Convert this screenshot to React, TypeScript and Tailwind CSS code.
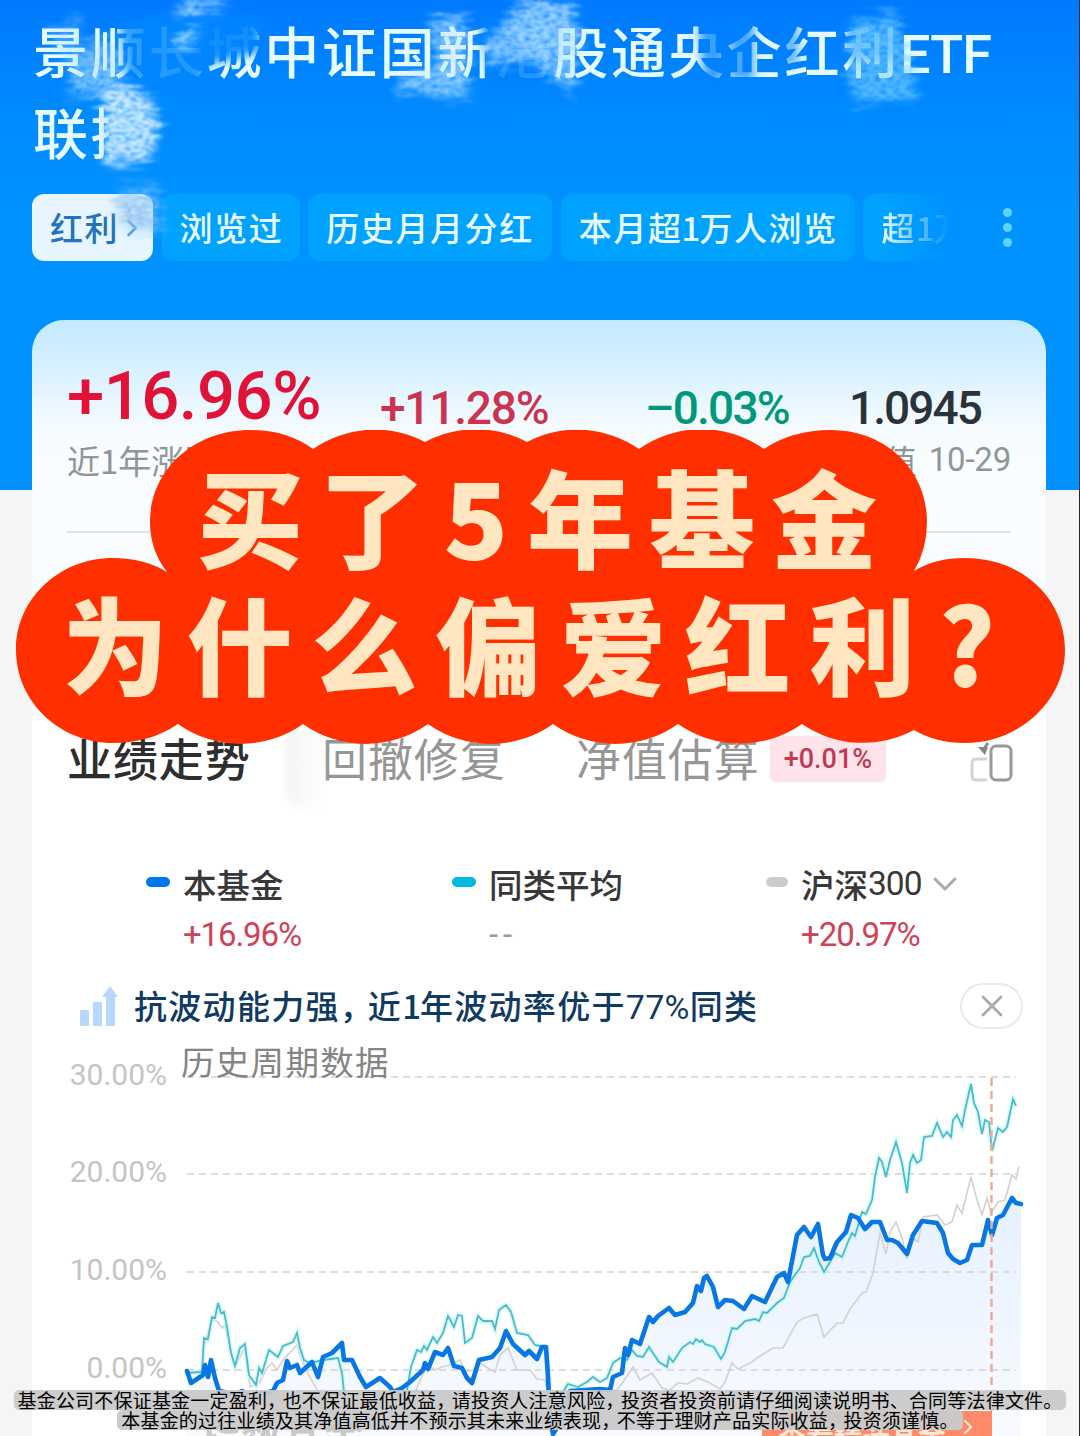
import React from "react";
import { ChevronDown, ChevronRight, X } from "lucide-react";

const tealLine =
  "188,1373 202,1372 204,1338 208,1339 212,1317 215,1318 218,1303 221,1313 224,1312 227,1327 231,1353 235,1366 240,1348 245,1344 249,1375 256,1385 259,1368 262,1373 269,1350 278,1357 283,1346 293,1342 297,1333 300,1348 304,1360 310,1363 323,1360 338,1358 342,1373 344,1392 404,1400 407,1390 411,1367 417,1350 421,1352 424,1346 427,1350 433,1337 437,1343 443,1333 448,1316 454,1327 458,1315 462,1316 465,1343 472,1338 478,1316 483,1321 492,1321 495,1329 499,1310 506,1305 511,1312 517,1333 528,1335 535,1345 545,1347 548,1360 550,1395 563,1392 568,1384 578,1387 587,1382 593,1377 600,1382 607,1378 613,1363 620,1358 627,1360 632,1350 637,1356 643,1357 649,1347 659,1362 667,1367 669,1357 673,1362 682,1348 690,1342 693,1344 696,1339 700,1342 702,1340 705,1344 714,1347 721,1359 725,1352 732,1328 737,1329 745,1321 755,1319 759,1321 763,1312 767,1313 777,1303 784,1298 790,1282 800,1268 804,1257 810,1256 814,1248 819,1262 824,1272 830,1262 835,1253 842,1257 848,1242 852,1233 855,1236 862,1212 866,1214 872,1200 875,1177 879,1158 882,1162 886,1177 890,1160 896,1142 902,1163 907,1193 910,1163 913,1155 917,1163 921,1160 924,1137 932,1136 937,1123 943,1137 947,1132 951,1137 953,1120 957,1115 962,1126 965,1110 971,1084 974,1103 978,1112 982,1134 985,1120 989,1122 992,1151 998,1128 1003,1132 1007,1127 1013,1099 1016,1106";

const fundLine =
  "187,1371 191,1383 203,1375 205,1365 208,1377 211,1360 215,1378 219,1391 236,1394 242,1391 250,1396 273,1391 277,1383 283,1380 287,1361 290,1368 297,1365 300,1373 312,1362 318,1377 323,1357 332,1353 342,1343 344,1360 352,1360 360,1377 366,1387 380,1378 390,1387 393,1392 402,1388 410,1382 423,1370 425,1363 428,1369 435,1352 443,1355 448,1348 454,1366 462,1368 467,1378 472,1383 479,1360 492,1357 500,1348 506,1331 513,1344 525,1355 529,1351 537,1359 542,1347 546,1347 548,1377 550,1420 553,1434 562,1420 570,1391 600,1389 610,1390 613,1377 622,1373 625,1348 628,1355 632,1340 640,1344 649,1317 653,1322 658,1316 669,1308 675,1315 685,1312 693,1303 697,1286 701,1291 704,1278 707,1276 713,1287 718,1307 725,1300 733,1301 744,1309 752,1296 765,1302 777,1277 784,1273 788,1282 797,1235 804,1227 811,1237 818,1224 823,1255 825,1259 830,1258 837,1242 846,1232 851,1215 858,1218 865,1229 872,1222 880,1222 887,1240 892,1240 898,1243 907,1254 913,1235 922,1221 937,1223 943,1233 948,1253 953,1259 960,1263 967,1260 972,1245 982,1245 988,1220 992,1235 997,1218 1003,1215 1012,1198 1016,1203 1021,1204";

const csiLine =
  "190,1372 202,1370 203,1350 212,1320 218,1322 222,1328 225,1325 232,1355 235,1366 240,1357 245,1348 250,1387 260,1382 267,1368 272,1363 277,1370 283,1360 297,1345 300,1355 307,1372 320,1395 415,1392 427,1365 435,1370 442,1367 450,1365 460,1360 465,1372 473,1370 480,1363 488,1368 495,1372 500,1355 508,1348 517,1370 530,1370 537,1379 545,1380 548,1395 617,1390 623,1382 633,1367 640,1380 652,1373 662,1388 670,1390 678,1383 687,1384 698,1378 710,1383 720,1389 725,1382 732,1363 738,1369 752,1362 757,1358 773,1348 783,1348 797,1322 804,1318 817,1314 824,1337 837,1323 843,1323 850,1309 862,1293 866,1292 873,1273 880,1233 886,1254 890,1232 896,1222 902,1238 907,1259 912,1237 918,1242 923,1217 937,1215 945,1225 952,1222 957,1205 962,1213 971,1177 977,1200 982,1215 987,1198 991,1213 998,1202 1005,1200 1012,1175 1016,1179 1019,1166";

const axis = [
  { label: "30.00%", y: 1077 },
  { label: "20.00%", y: 1174 },
  { label: "10.00%", y: 1272 },
  { label: "0.00%", y: 1370 },
];

const cjk = "font-['Noto_Sans_CJK_SC',sans-serif]";
const num = "font-[Roboto,'Noto_Sans_CJK_SC',sans-serif]";

function Smudges() {
  return (
    <svg className="absolute inset-0" width="1080" height="300" viewBox="0 0 1080 300">
      <defs>
        <filter id="grain" x="-10%" y="-10%" width="120%" height="120%">
          <feGaussianBlur in="SourceGraphic" stdDeviation="4" result="b" />
          <feTurbulence type="fractalNoise" baseFrequency="0.03 0.18" numOctaves="2" seed="7" result="w" />
          <feDisplacementMap in="b" in2="w" scale="26" xChannelSelector="R" yChannelSelector="A" result="d" />
          <feTurbulence type="fractalNoise" baseFrequency="0.16 0.34" numOctaves="3" seed="4" result="n" />
          <feColorMatrix in="n" type="matrix" values="0 0 0 0 1  0 0 0 0 1  0 0 0 0 1  0 2 0 0 -0.2" result="m" />
          <feComposite in="d" in2="m" operator="in" />
          <feGaussianBlur stdDeviation="0.8" />
        </filter>
        <filter id="soft">
          <feGaussianBlur stdDeviation="5" />
        </filter>
      </defs>
      <g filter="url(#soft)">
        <path d="M120 20h30v62h-24z" fill="#0787ff" opacity=".8" />
        <path d="M146 16h58v68h-58z" fill="#0787ff" opacity=".85" />
        <path d="M200 16h60v36l-60 14z" fill="#0684ff" opacity=".92" />
        <path d="M480 18h70v68h-58z" fill="#0581ff" opacity=".85" />
        <path d="M698 20h26v62h-20z" fill="#0581ff" opacity=".75" />
        <path d="M730 16h24v64h-24z" fill="#0581ff" opacity=".7" />
        <path d="M784 16h14v50h-14z" fill="#0581ff" opacity=".6" />
        <path d="M846 16h50v44h-50z" fill="#0787ff" opacity=".6" />
        <path d="M110 96h50v68h-50z" fill="#0a92ff" />
      </g>
      <g filter="url(#grain)">
        <path d="M40 30l40-14v40l46 6 2 34-62 4 10-22z" fill="#9bdcff" opacity=".4" />
        <path d="M82 40h34l6 56-54-6z" fill="#b4e4ff" opacity=".55" />
        <path d="M178 0h54l-14 8-40 8z" fill="#a6dcff" />
        <path d="M172 42l28-16-8 20z" fill="#a4ddff" />
        <path d="M102 90l36-2 22 36-12 34-40 10-4-60z" fill="#e4f5ff" />
        <path d="M102 96h50l-6 58-40 10z" fill="#c8eaff" opacity=".8" />
        <path d="M112 188l46-6 6 52-40-4-10-24z" fill="#79c8ff" opacity=".5" />
        <path d="M118 198h36v30l-34-4z" fill="#8fc1ee" opacity=".8" />
        <path d="M430 18l36-2 2 80-72-2 4-20 36-4z" fill="#c4e8ff" opacity=".7" />
        <path d="M484 44l30-30 8-14h46l14 46-10 48-40-34-48 4z" fill="#b8e4ff" opacity=".7" />
        <path d="M508 4h66v50h-50z" fill="#a8dbff" opacity=".6" />
        <path d="M850 24l46-12 18 62 2 24-64 6z" fill="#7cd2ff" opacity=".7" />
      </g>
    </svg>
  );
}

function Header() {
  return (
    <header className="relative h-[490px] bg-[linear-gradient(180deg,#007aff_0%,#0088ff_20%,#0092ff_42%,#0092ff_100%)] pt-[9px] pl-[33px] text-[#e6fbff]">
      <h1 className={`${cjk} h-[165px] text-[55px] leading-[81px] font-medium tracking-[2.8px] whitespace-nowrap`}>
        景顺长城中证国新港股通央企红利<span className="font-[Roboto] text-[54px] leading-none tracking-[-0.8px]">ETF</span>
        <br />
        联接
      </h1>
      <div className={`${cjk} -ml-px mt-[20px] flex h-[67px] gap-[8.6px] text-[33px] leading-[67px] font-medium tracking-[1.6px] whitespace-nowrap`}>
        <div className="flex w-[121px] items-center rounded-xl bg-[#e6f5ff] pl-[18px] text-[#2372bd]">
          红利
          <ChevronRight className="-ml-px h-7 w-7 text-[#5b9bd4]" strokeWidth={2.2} />
        </div>
        <div className="w-[138px] rounded-xl bg-[#00a2ff] pl-[18px]">浏览过</div>
        <div className="w-[244px] rounded-xl bg-[#00a2ff] pl-[18px]">历史月月分红</div>
        <div className="w-[294px] rounded-xl bg-[#00a2ff] pl-[18px]">
          本月超<span className="-ml-px tracking-[-1px]">1</span>万人浏览
        </div>
        <div className="w-[96px] overflow-hidden rounded-l-xl bg-[#00a2ff] mask-r-from-20% mask-r-to-90% pl-[18px]">
          超<span className="tracking-[-1px]">1</span>万
        </div>
        <div className="ml-[35px] flex flex-col justify-center gap-[6px]">
          <i className="h-[9px] w-[9px] rounded-full bg-[#5cd2ff]" />
          <i className="h-[9px] w-[9px] rounded-full bg-[#5cd2ff]" />
          <i className="h-[9px] w-[9px] rounded-full bg-[#5cd2ff]" />
        </div>
      </div>
      <Smudges />
    </header>
  );
}

function Stats() {
  return (
    <section className="mx-[35px] h-[213px] border-b-2 border-[#dfe3e6] whitespace-nowrap">
      <div className={`${num} flex h-[118px] items-end text-[46px] leading-[60px] font-medium`}>
        <span className="w-[313px] text-[67px] leading-[84px] tracking-[-0.5px] text-[#e01238]">+16.96%</span>
        <span className="w-[265px] tracking-[-1.2px] text-[#cc3350]">+11.28%</span>
        <span className="w-[204px] tracking-[-1.8px] text-[#009878]">–0.03%</span>
        <span className="tracking-[-1.9px] text-[#2b3238]">1.0945</span>
      </div>
      <div className={`${cjk} flex justify-between text-[33px] leading-[44px] text-[#909597]`}>
        <span>近1年涨跌幅</span>
        <span className="flex">
          净值<span className={`${num} ml-3 tracking-[-0.2px]`}>10-29</span>
        </span>
      </div>
    </section>
  );
}

function Tabs() {
  return (
    <nav className={`${cjk} mt-[190px] flex h-[70px] items-center pl-[35px] text-[45px] tracking-[0.9px] whitespace-nowrap text-[#969696]`}>
      <b className="w-[219px] font-medium text-[#2e2e2e]">业绩走势</b>
      <div className="h-[100px] w-[36px] rounded-bl-2xl bg-[linear-gradient(90deg,#f4f4f4,#ffffff)] blur-[3px]" />
      <span className="w-[254px]">回撤修复</span>
      <span className="w-[194px]">净值估算</span>
      <span className={`${num} mt-[2px] h-[46px] w-[116px] rounded-md bg-[#fee4ea] text-center text-[27px] leading-[46px] font-medium tracking-normal text-[#c23a52]`}>
        +0.01%
      </span>
      <svg className="mt-3 ml-[83px]" width="46" height="44" viewBox="0 0 46 44" fill="none" strokeWidth="3">
        <path d="M18 17H7q-4 0-4 4v13q0 4 4 4h11" stroke="#d4d4d4" />
        <path d="M19 1q-3 3-4 8" stroke="#8c8c8c" />
        <path d="M9 5h10l-3 8z" fill="#858585" />
        <rect x="22" y="4" width="20" height="34" rx="5" stroke="#999" />
      </svg>
    </nav>
  );
}

function Legend() {
  return (
    <section className={`${cjk} mt-[66px] flex h-[100px] pl-[114px] text-[33.5px] leading-[50px] font-medium whitespace-nowrap text-[#383838]`}>
      <div className="flex w-[306px] gap-[13px]">
        <i className="mt-[18px] h-[10px] w-[24px] rounded-full bg-[#0077ee]" />
        <div>
          <p>本基金</p>
          <p className={`${num} pt-px text-[33px] font-normal tracking-[-1.1px] text-[#cf4357]`}>+16.96%</p>
        </div>
      </div>
      <div className="flex w-[314px] gap-[13px]">
        <i className="mt-[18px] h-[10px] w-[24px] rounded-full bg-[#00b9e2]" />
        <div>
          <p>同类平均</p>
          <p className={`${num} pt-px text-[33px] font-normal tracking-[5px] text-[#9b9b9b]`}>--</p>
        </div>
      </div>
      <div className="flex gap-[13px]">
        <i className="mt-[18px] h-[10px] w-[22px] rounded-full bg-[#cccccc]" />
        <div>
          <p className="flex items-center">
            沪深<span className={`${num} font-normal tracking-[-1px]`}>300</span>
            <ChevronDown className="ml-[4px] h-[40px] w-[40px] text-[#aaaaaa]" strokeWidth={1.8} />
          </p>
          <p className={`${num} pt-px text-[33px] font-normal tracking-[-1px] text-[#cf4357]`}>+20.97%</p>
        </div>
      </div>
    </section>
  );
}

function Insight() {
  return (
    <section className="mt-[22px] flex h-[49px] items-center pl-[47px] whitespace-nowrap">
      <svg width="42" height="42" viewBox="0 0 42 42" fill="#b7d8fc">
        <rect x="1" y="25" width="9" height="16" rx="1" />
        <rect x="14" y="17" width="9" height="24" rx="1" />
        <path d="M27 41V12h-4l8-11 8 11h-3v29z" />
      </svg>
      <p className={`${cjk} ml-[13px] w-[826px] pt-[2px] text-[33px] font-medium tracking-[1.3px] text-[#113a63]`}>
        抗波动能力强<span className="tracking-[-5px]">，</span>近<span className="tracking-[-1px]">1</span>年波动率优于
        <span className={`${num} text-[34px] font-normal tracking-[0.3px]`}>77%</span>同类
      </p>
      <button className="flex h-[46px] w-[63px] items-center justify-center rounded-full border-2 border-[#e7ece7]">
        <X className="h-[36px] w-[36px] text-[#a9a9a9]" strokeWidth={1.8} />
      </button>
    </section>
  );
}

function Chart() {
  return (
    <section className="relative h-[406px]">
      <svg className="-ml-8" width="1080" height="406" viewBox="0 1030 1080 406" fill="none">
        <defs>
          <linearGradient id="area" x1="0" y1="1200" x2="0" y2="1436" gradientUnits="userSpaceOnUse">
            <stop offset="0" stopColor="#e6f1ff" />
            <stop offset="1" stopColor="#f8fafe" />
          </linearGradient>
        </defs>
        <path d={`M187 1436L${fundLine}V1436z`} fill="url(#area)" />
        {axis.map((a) => (
          <g key={a.label}>
            <path d={`M187 ${a.y}H1016`} stroke="#dcdcdc" strokeWidth="2" strokeDasharray="7 5" />
            <text x="167" y={a.y + 8} textAnchor="end" fontFamily="Roboto, sans-serif" fontSize="30" fill="#c4c4c4">
              {a.label}
            </text>
          </g>
        ))}
        <polyline points={csiLine} stroke="#d3d3d6" strokeWidth="1.7" />
        <polyline points={tealLine} stroke="#c5f7fb" strokeWidth="5" opacity=".6" />
        <polyline points={tealLine} stroke="#4bbcc6" strokeWidth="1.8" />
        <polyline points={fundLine} stroke="#0877e4" strokeWidth="4.6" strokeLinejoin="round" strokeLinecap="round" />
        <path d="M991.5 1078V1412" stroke="#eea994" strokeWidth="2.4" strokeDasharray="8 5" />
      </svg>
      <p className={`${cjk} absolute top-[6px] left-[149px] text-[33.5px] leading-[50px] tracking-[1.3px] text-[#858585]`}>历史周期数据</p>
      <div className={`${cjk} absolute top-[372px] left-[168px] h-[34px] overflow-hidden text-[41px] leading-[62px] font-bold text-[#c9c9c9]`}>
        指数基金
      </div>
      <div
        className={`${cjk} absolute top-[381px] left-[730px] flex h-[25px] w-[230px] overflow-hidden bg-[#ff8a67] pl-[16px] text-[28px] leading-[50px] font-bold text-[#ffe9d9]`}
      >
        查看精选基金
        <ChevronRight className="mt-[4px] ml-[10px] h-6 w-6 shrink-0" />
      </div>
    </section>
  );
}

function Caption() {
  return (
    <div className="absolute top-[430px] left-[16px] h-[314px] w-[1049px]">
      <svg className="absolute inset-0" width="1049" height="314" viewBox="16 430 1049 314">
        <path
          d="M16 650C16 598 60 558 113 558Q144 558 167 572Q150 550 150 522C150 470 194 430 250 430Q287 430 313 449A108 108 0 0 1 425 442A108 108 0 0 1 527 442A108 108 0 0 1 639 449A108 108 0 0 1 764 449Q792 430 831 430C886 430 927 470 927 522Q927 549 914 571Q935 558 965 558C1022 558 1065 598 1065 650C1065 702 1018 743 965 743Q936 743 914 730A108 108 0 0 1 802 724A108 108 0 0 1 678 724A108 108 0 0 1 553 724A108 108 0 0 1 428 724A108 108 0 0 1 303 724A108 108 0 0 1 178 724Q150 743 113 743C60 743 16 702 16 650z"
          fill="#ff2f00"
        />
      </svg>
      <div className={`${cjk} relative pt-[22px] text-[106px] leading-[124px] font-black text-[#ffe5c0]`}>
        <p className="flex h-[127px] pl-[173px] text-center">
          {[..."买了5年基金"].map((c, i) => (
            <span key={i} className={c === "5" ? "w-[86px]" : "w-[122px]"}>
              {c}
            </span>
          ))}
        </p>
        <p className="flex pl-[37px] text-center">
          {[..."为什么偏爱红利?"].map((c, i) => (
            <span key={i} className={c === "?" ? "w-[85px]" : "w-[124.5px]"}>
              {c}
            </span>
          ))}
        </p>
      </div>
    </div>
  );
}

function Disclaimer({ text }: { text: string }) {
  return (
    <p className="h-[20px] rounded-[5px] bg-[#c9c9c9]/95 px-[4px]">
      {text.split(/(，)/).map((t, i) => (
        <span key={i} className={t === "，" ? "tracking-[-3.5px]" : ""}>
          {t}
        </span>
      ))}
    </p>
  );
}

export default function App() {
  return (
    <div className="relative h-[1436px] w-[1080px] overflow-hidden bg-[#f5f5f5]">
      <Header />
      <main className="relative -mt-[170px] ml-[32px] h-[1116px] w-[1014px] rounded-t-[32px] bg-[linear-gradient(180deg,#c4eaff_0px,#d5f0ff_45px,#f3faff_100px,#fafdff_150px,#f9fdff_250px,#ffffff_330px)]">
        <Stats />
        <Tabs />
        <Legend />
        <Insight />
        <Chart />
      </main>
      <Caption />
      <footer
        className={`${cjk} absolute inset-x-0 top-[1390px] flex flex-col items-center text-[19px] leading-[19px] tracking-[0.2px] whitespace-nowrap text-black`}
      >
        <Disclaimer text="基金公司不保证基金一定盈利，也不保证最低收益，请投资人注意风险，投资者投资前请仔细阅读说明书、合同等法律文件。" />
        <Disclaimer text="本基金的过往业绩及其净值高低并不预示其未来业绩表现，不等于理财产品实际收益，投资须谨慎。" />
      </footer>
      <div className="absolute top-0 right-0 h-full w-px bg-[#1d2a3a]" />
    </div>
  );
}
